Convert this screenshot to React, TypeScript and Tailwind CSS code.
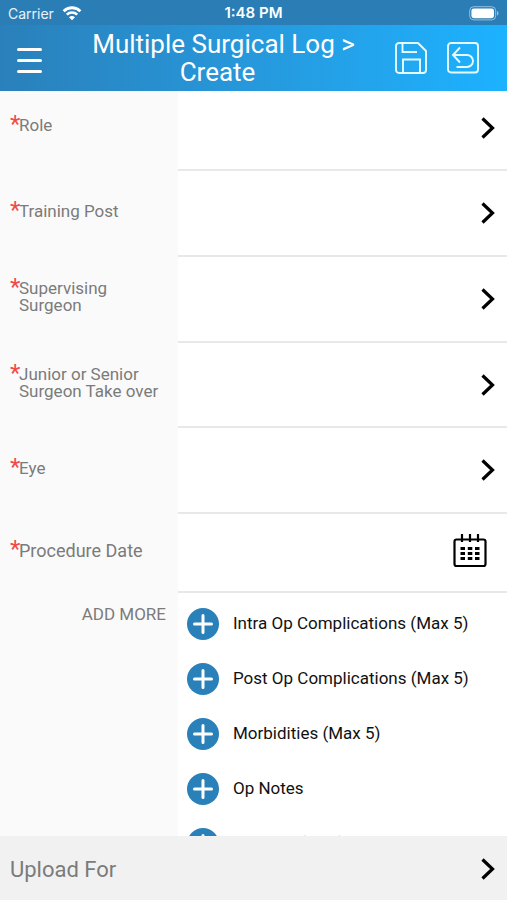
import { useState } from "react";

type Field = {
  id: string;
  label: string;
  className: string;
};

const FIELDS: Field[] = [
  { id: "role", label: "Role", className: "h-20 pb-1" },
  { id: "training-post", label: "Training Post", className: "h-[86px]" },
  { id: "supervisor", label: "Supervising Surgeon", className: "h-[86px]" },
  { id: "take-over", label: "Junior or Senior Surgeon Take over", className: "h-[85px]" },
  { id: "eye", label: "Eye", className: "h-[86px]" },
];

const EXTRAS = [
  "Intra Op Complications (Max 5)",
  "Post Op Complications (Max 5)",
  "Morbidities (Max 5)",
  "Op Notes",
  "Consent (Max)",
];

function WifiIcon() {
  return (
    <svg width="20" height="15" viewBox="0 0 20 15" fill="none" stroke="white" aria-hidden>
      <path d="M1.6 5.2a12 12 0 0 1 16.8 0" strokeWidth="2.8" />
      <path d="M4.8 8.6a7.5 7.5 0 0 1 10.4 0" strokeWidth="2.6" />
      <path d="M10 14.2 7 11.2a4.2 4.2 0 0 1 6 0z" fill="white" stroke="none" />
    </svg>
  );
}

function BatteryIcon() {
  return (
    <svg width="30" height="15" viewBox="0 0 30 15" fill="none" aria-hidden>
      <rect x="0.7" y="0.7" width="26" height="13.2" rx="4" stroke="white" strokeOpacity="0.5" />
      <rect x="2.4" y="2.4" width="22.6" height="9.8" rx="2.4" fill="white" />
      <path d="M28 5v4.6c1-.4 1.5-1.2 1.5-2.3S29 5.4 28 5z" fill="white" fillOpacity="0.5" />
    </svg>
  );
}

function SaveIcon() {
  return (
    <svg width="32" height="32" viewBox="0 0 32 32" fill="none" stroke="#e6fbff" strokeWidth="1.9" aria-hidden>
      <path d="M4 1h19l8 8v19a3 3 0 0 1-3 3H4a3 3 0 0 1-3-3V4a3 3 0 0 1 3-3z" strokeLinejoin="round" />
      <path d="M7.5 1v9H22" />
      <path d="M8 31V17.5h17V31" />
    </svg>
  );
}

function BackIcon() {
  return (
    <svg width="32" height="32" viewBox="0 0 32 32" fill="none" stroke="#e6fbff" strokeWidth="1.9" aria-hidden>
      <rect x="1" y="1" width="30" height="29.5" rx="3" />
      <path d="M13 5.5 6 13l7 7.500" />
      <path d="M6.500 13H20a6 6 0 0 1 0 12H9.500" />
    </svg>
  );
}

function Chevron() {
  return (
    <svg width="14" height="22" viewBox="0 0 14 22" fill="none" stroke="black" strokeWidth="3.2" aria-hidden>
      <path d="M1.5 1.5 11.5 11l-10 9.500" />
    </svg>
  );
}

function CalendarIcon() {
  return (
    <svg width="34" height="34" viewBox="0 0 34 34" fill="none" stroke="black" aria-hidden>
      <rect x="1.500" y="5.500" width="31" height="26.500" rx="2" strokeWidth="2.200" />
      <path d="M9 0v8M17 0v8M25 0v8" strokeWidth="2.200" />
      <path
        d="M7.500 14.500H12M14.800 14.500h4.500M22 14.500h4.500M7.500 19.500H12M14.800 19.500h4.500M22 19.500h4.500M7.500 24.500H12M14.800 24.500h4.500M22 24.500h4.500"
        strokeWidth="3.200"
      />
    </svg>
  );
}

function PlusIcon() {
  return (
    <svg width="32" height="32" viewBox="0 0 32 32" aria-hidden>
      <circle cx="16" cy="16" r="16" fill="#2a80b9" />
      <path d="M16 7.500v17M7.500 16h17" stroke="white" strokeWidth="3" strokeLinecap="round" />
    </svg>
  );
}

function FieldLabel({ id, label, large }: { id: string; label: string; large?: boolean }) {
  return (
    <div
      className={`flex w-[178px] shrink-0 items-center pl-2.5 pr-2 text-[#7b7b7b] ${
        id === "role" ? "pb-3" : "pb-1.5"
      }`}
    >
      <div className="flex items-start">
        <span className="w-[9px] shrink-0 text-[24px] leading-[15px] text-[#f04a4a]">*</span>
        <span id={id} className={large ? "text-[18px] leading-[17px]" : "text-[17px] leading-[17px]"}>
          {label}
        </span>
      </div>
    </div>
  );
}

export default function App() {
  const [open, setOpen] = useState<string | null>(null);

  return (
    <div className="flex h-screen flex-col bg-white font-[Roboto,sans-serif]">
      <div className="grid h-[25px] shrink-0 grid-cols-3 items-center bg-[#2a7db5] px-2 pt-0.5 font-[Inter,sans-serif] text-[14px] text-white">
        <div className="flex items-center gap-2 text-white/90">
          Carrier <WifiIcon />
        </div>
        <div className="text-center text-[15px] font-semibold">1:48 PM</div>
        <div className="flex justify-end">
          <BatteryIcon />
        </div>
      </div>

      <header className="flex h-[66px] shrink-0 items-center bg-linear-to-r from-[#2a80ba] to-[#1cb2ff] pl-4 pr-7 text-white">
        <button aria-label="Menu" className="flex w-[26px] shrink-0 flex-col gap-2 pl-px pt-1">
          <span className="h-[3px] w-full rounded-full bg-white" />
          <span className="h-[3px] w-full rounded-full bg-white" />
          <span className="h-[3px] w-full rounded-full bg-white" />
        </button>
        <h1 className="flex-1 pl-2.5 text-center text-[26px] leading-7">
          <span className="block">Multiple Surgical Log &gt;</span>
          <span className="block pr-3">Create</span>
        </h1>
        <div className="flex shrink-0 gap-5">
          <button aria-label="Save">
            <SaveIcon />
          </button>
          <button aria-label="Back">
            <BackIcon />
          </button>
        </div>
      </header>

      <main className="min-h-0 flex-1 overflow-y-auto bg-[#fafafa] [scrollbar-width:none]">
        {FIELDS.map((f) => (
          <div key={f.id} className="flex">
            <FieldLabel id={f.id} label={f.label} />
            <button
              aria-labelledby={f.id}
              aria-expanded={open === f.id}
              onClick={() => setOpen(open === f.id ? null : f.id)}
              className={`flex flex-1 items-center justify-end border-b-2 border-[#e8e8e8] bg-white pr-3 ${f.className}`}
            >
              <Chevron />
            </button>
          </div>
        ))}

        <div className="flex">
          <FieldLabel id="procedure-date" label="Procedure Date" large />
          <button
            aria-labelledby="procedure-date"
            className="flex h-[79px] flex-1 items-center justify-end border-b-2 border-[#e8e8e8] bg-white pb-1 pr-5"
          >
            <CalendarIcon />
          </button>
        </div>

        <div className="flex">
          <h2 className="w-[178px] shrink-0 pr-3 pt-[11px] text-right text-[17px] leading-5 text-[#7b7b7b]">
            ADD MORE
          </h2>
          <ul className="flex-1 bg-white pl-[9px] pt-[3px]">
            {EXTRAS.map((name) => (
              <li key={name}>
                <button className="flex h-[55px] w-full items-center gap-3.5 text-left text-[17px] text-[#111]">
                  <PlusIcon />
                  {name}
                </button>
              </li>
            ))}
          </ul>
        </div>
      </main>

      <button className="flex h-16 shrink-0 items-center justify-between bg-[#f1f1f1] pl-2.5 pr-3 pt-0.5 text-[22px] text-[#7b7b7b]">
        Upload For
        <Chevron />
      </button>
    </div>
  );
}
